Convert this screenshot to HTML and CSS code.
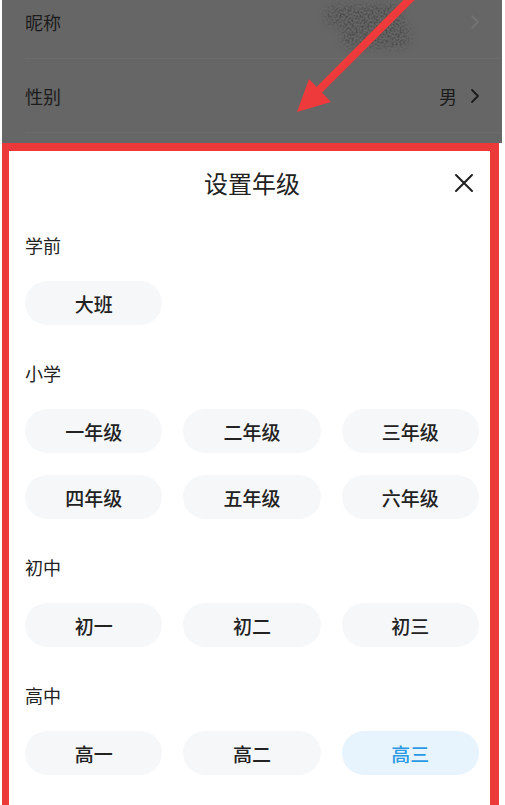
FILE: index.html
```html
<!DOCTYPE html>
<html lang="zh-CN">
<head>
<meta charset="utf-8">
<title>设置年级</title>
<link rel="stylesheet" href="styles.css">
</head>
<body>
<div class="screen">
  <div class="dim">
    <div class="list">
      <div class="row">
        <span class="row-label">昵称</span>
        <span class="row-value">
          <svg class="chev faint" viewBox="0 0 10 16" width="10" height="16"><path d="M2 2 L8 8 L2 14" fill="none" stroke="currentColor" stroke-width="1.6" stroke-linecap="round" stroke-linejoin="round"/></svg>
        </span>
      </div>
      <div class="row">
        <span class="row-label">性别</span>
        <span class="row-value">
          <span>男</span>
          <svg class="chev" viewBox="0 0 10 16" width="10" height="16"><path d="M2 2 L8 8 L2 14" fill="none" stroke="currentColor" stroke-width="1.8" stroke-linecap="round" stroke-linejoin="round"/></svg>
        </span>
      </div>
    </div>
  </div>

  <div class="sheet">
    <div class="sheet-head">
      <span></span>
      <span class="sheet-title">设置年级</span>
      <svg class="close" viewBox="0 0 20 20" width="20" height="20"><path d="M2 2 L18 18 M18 2 L2 18" fill="none" stroke="#1f1f1f" stroke-width="2" stroke-linecap="round"/></svg>
    </div>
    <div class="sheet-body">
      <div class="group">
        <div class="group-label">学前</div>
        <div class="chips">
          <div class="chip">大班</div>
        </div>
      </div>
      <div class="group">
        <div class="group-label">小学</div>
        <div class="chips">
          <div class="chip">一年级</div>
          <div class="chip">二年级</div>
          <div class="chip">三年级</div>
          <div class="chip">四年级</div>
          <div class="chip">五年级</div>
          <div class="chip">六年级</div>
        </div>
      </div>
      <div class="group">
        <div class="group-label">初中</div>
        <div class="chips">
          <div class="chip">初一</div>
          <div class="chip">初二</div>
          <div class="chip">初三</div>
        </div>
      </div>
      <div class="group">
        <div class="group-label">高中</div>
        <div class="chips">
          <div class="chip">高一</div>
          <div class="chip">高二</div>
          <div class="chip selected">高三</div>
        </div>
      </div>
    </div>
  </div>

  <svg class="blur-blob" viewBox="0 0 100 56" width="100" height="56">
    <defs>
      <filter id="noise" x="0" y="0" width="100%" height="100%" color-interpolation-filters="sRGB">
        <feTurbulence type="fractalNoise" baseFrequency="0.5" numOctaves="2" seed="7" result="t"/>
        <feColorMatrix in="t" type="matrix" values="0 0 0 0 0.3  0 0 0 0 0.3  0 0 0 0 0.3  3.2 0 0 0 -1.25"/>
        <feGaussianBlur stdDeviation="0.5"/>
      </filter>
      <filter id="soft" x="-30%" y="-30%" width="160%" height="160%" color-interpolation-filters="sRGB">
        <feGaussianBlur stdDeviation="4"/>
      </filter>
      <mask id="blobmask">
        <g filter="url(#soft)" fill="#fff">
          <rect x="8" y="5" width="76" height="22" rx="8"/>
          <rect x="24" y="22" width="68" height="26" rx="8"/>
        </g>
      </mask>
    </defs>
    <rect x="0" y="0" width="100" height="56" filter="url(#noise)" mask="url(#blobmask)"/>
  </svg>

  <svg class="arrow" viewBox="0 0 505 805" width="505" height="805">
    <line x1="414" y1="-5" x2="318" y2="91" stroke="#ee3a3a" stroke-width="8"/>
    <polygon points="297,112 309,79 331,102" fill="#ee3a3a"/>
  </svg>
</div>
</body>
</html>
```

FILE: styles.css
```css
* {
  box-sizing: border-box;
}

html, body {
  margin: 0;
  padding: 0;
  background: #ffffff;
}

body {
  font-family: "Noto Sans CJK SC", "Noto Sans", "Liberation Sans", sans-serif;
  color: #222222;
}

.screen {
  position: relative;
  width: 505px;
  height: 805px;
  overflow: hidden;
  background: #ffffff;
}

/* dimmed page behind the sheet */
.dim {
  margin: 0 3px 0 2px;
  height: 143px;
  background: #666666;
  overflow: hidden;
}

.list {
  margin-top: -15px;
}

.row {
  height: 74px;
  margin-left: 23px;
  padding-right: 22px;
  display: flex;
  align-items: center;
  justify-content: space-between;
  border-bottom: 1px solid #6c6c6c;
  font-size: 18px;
  line-height: 24px;
  color: #1c1c1c;
}

.row-value {
  display: flex;
  align-items: center;
  gap: 13px;
}

.chev {
  display: block;
  color: #1c1c1c;
}

.chev.faint {
  color: #767676;
}

/* bottom sheet */
.sheet {
  margin: 0 6px 0 2px;
  height: 662px;
  background: #ffffff;
  border-top: 8px solid #ec3a3a;
  border-left: 7px solid #ec3a3a;
  border-right: 9px solid #ec3a3a;
}

.sheet-head {
  height: 63px;
  padding: 0 16px 0 21px;
  display: grid;
  grid-template-columns: 1fr auto 1fr;
  align-items: center;
}

.sheet-title {
  font-size: 24px;
  line-height: 32px;
  color: #222222;
}

.close {
  justify-self: end;
  display: block;
}

.sheet-body {
  padding: 19px 11px 0 16px;
  display: flex;
  flex-direction: column;
  gap: 36px;
}

.group-label {
  font-size: 18px;
  line-height: 24px;
  color: #222222;
  margin-bottom: 24px;
}

.chips {
  display: grid;
  grid-template-columns: repeat(3, 1fr);
  column-gap: 21px;
  row-gap: 22px;
}

.chip {
  height: 44px;
  border-radius: 22px;
  background: #f6f7f9;
  display: flex;
  align-items: center;
  justify-content: center;
  font-size: 19px;
  font-weight: 500;
  color: #222222;
}

.chip.selected {
  background: #e7f3fd;
  color: #2b9ae4;
}

/* annotation overlays */
.blur-blob {
  position: absolute;
  left: 318px;
  top: 0;
  pointer-events: none;
}

.arrow {
  position: absolute;
  left: 0;
  top: 0;
  pointer-events: none;
}
```
